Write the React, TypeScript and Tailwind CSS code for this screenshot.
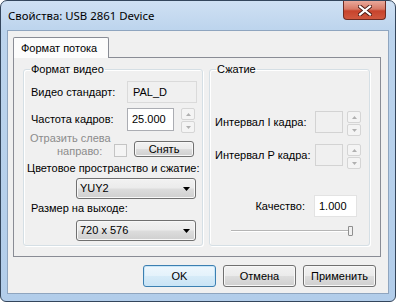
import React from 'react';

const btnGrad =
  'bg-[linear-gradient(180deg,#f2f2f2_0%,#ebebeb_48%,#dddddd_52%,#cfcfcf_100%)]';

function Spinner() {
  return (
    <div className="flex flex-col gap-[1px] w-[14px] h-[25px]">
      <div className="flex-1 flex items-center justify-center border border-[#d5d5d5] rounded-[2px] bg-[#f4f4f4]">
        <svg width="5" height="3" viewBox="0 0 5 3">
          <path d="M0 3L2.5 0L5 3Z" fill="#b0b0b0" />
        </svg>
      </div>
      <div className="flex-1 flex items-center justify-center border border-[#d5d5d5] rounded-[2px] bg-[#f4f4f4]">
        <svg width="5" height="3" viewBox="0 0 5 3">
          <path d="M0 0L2.5 3L5 0Z" fill="#b0b0b0" />
        </svg>
      </div>
    </div>
  );
}

function Combo({ value }: { value: string }) {
  return (
    <div
      className={`w-[120px] h-[21px] flex items-center justify-between pl-[3px] pr-[5px] rounded-[3px] border border-[#707070] shadow-[inset_0_0_0_1px_#f8f8f8] ${btnGrad}`}
    >
      <span>{value}</span>
      <svg width="7" height="4" viewBox="0 0 7 4">
        <path d="M0 0H7L3.5 4Z" fill="#000" />
      </svg>
    </div>
  );
}

function Button({ label, primary }: { label: string; primary?: boolean }) {
  return (
    <div
      className={`w-[73px] h-[22px] flex items-center justify-center rounded-[3px] border ${
        primary
          ? 'border-[#3c7fb1] shadow-[inset_0_0_0_1px_#c8e6f8] bg-[linear-gradient(180deg,#eef7fd_0%,#e4f2fb_48%,#d6ebf8_52%,#c9e3f5_100%)]'
          : `border-[#707070] shadow-[inset_0_0_0_1px_#f8f8f8] ${btnGrad}`
      }`}
    >
      {label}
    </div>
  );
}

export default function App() {
  return (
    <div className="w-[396px] h-[302px] flex flex-col rounded-t-[7px] rounded-b-[6px] border border-[#34465c] bg-[linear-gradient(180deg,#cfe0f3_0px,#bcd4ed_30px,#b2cdea_100%)] overflow-hidden text-[11px] text-black font-['Liberation_Sans',Arial,sans-serif] whitespace-nowrap">
      {/* title bar */}
      <div className="h-[29px] flex items-start justify-between">
        <div className="pl-[7px] pt-[7px] text-[11.4px] leading-[15px] font-['Noto_Sans',sans-serif]">
          Свойства: USB 2861 Device
        </div>
        <div className="mr-[9px] w-[43px] h-[19px] flex items-center justify-center rounded-b-[4px] border border-t-0 border-[#6e2b22] bg-[linear-gradient(180deg,#e9a99b_0%,#d77a67_45%,#c7432c_55%,#d0583f_100%)]">
          <svg width="14" height="11" viewBox="0 0 14 11">
            <path
              d="M2 1.5L12 9.5M12 1.5L2 9.5"
              stroke="#4a1a14"
              strokeWidth="4"
              strokeLinecap="square"
            />
            <path
              d="M2 1.5L12 9.5M12 1.5L2 9.5"
              stroke="#ffffff"
              strokeWidth="2.2"
              strokeLinecap="square"
            />
          </svg>
        </div>
      </div>

      {/* client area */}
      <div className="mx-[6px] mb-[7px] flex-1 flex flex-col border border-[#8fa5bf] bg-[#f0f0f0] pt-[6px] px-[5px]">
        {/* tab header */}
        <div className="flex">
          <div className="relative z-10 -mb-px h-[21px] w-[96px] flex items-center pl-[7px] border border-b-0 border-[#898c95] rounded-t-[2px] bg-[#fcfcfc]">
            Формат потока
          </div>
        </div>

        {/* tab panel */}
        <div className="h-[200px] w-[368px] border border-[#898c95] bg-[#f0f0f0] pl-[9px] pr-[10px] pt-[4px] flex gap-[6px]">
          {/* video format */}
          <fieldset className="w-[180px] h-[184px] border border-[#d5dfe5] rounded-[3px] shadow-[inset_1px_1px_0_#ffffff,1px_1px_0_#ffffff]">
            <legend className="ml-[6px] px-[1px] leading-[14px]">Формат видео</legend>
            <div className="flex flex-col pl-[7px]">
              <div className="mt-[5px] flex items-center">
                <div className="w-[96px]">Видео стандарт:</div>
                <div className="w-[70px] h-[22px] flex items-center pl-[5px] border border-[#dadada] bg-[#f0f0f0]">
                  PAL_D
                </div>
              </div>

              <div className="mt-[5px] flex items-start">
                <div className="w-[96px] h-[23px] flex items-center">Частота кадров:</div>
                <div className="w-[47px] h-[23px] flex items-center pl-[4px] border border-[#abadb3] bg-white">
                  25.000
                </div>
                <div className="ml-[7px]">
                  <Spinner />
                </div>
              </div>

              <div className="-mt-px flex items-start">
                <div className="w-[82px] shrink-0 -ml-px flex flex-col leading-[13px] text-[#8c8c8c]">
                  <div className="flex">
                    <span>Отразить слева</span>
                  </div>
                  <div className="flex">
                    <div className="w-[27px] shrink-0" />
                    <span>направо:</span>
                  </div>
                </div>
                <div className="ml-[2px] mt-[12px] w-[13px] h-[13px] border border-[#c4c4c4] bg-[#f4f4f4]" />
                <div
                  className={`ml-[7px] mt-[9px] w-[60px] h-[16px] flex items-center justify-center rounded-[3px] border border-[#707070] shadow-[inset_0_0_0_1px_#f8f8f8] ${btnGrad}`}
                >
                  Снять
                </div>
              </div>

              <div className="mt-[3px] -ml-[4px] leading-[14px]">
                Цветовое пространство и сжатие:
              </div>
              <div className="mt-[3px] ml-[45px]">
                <Combo value="YUY2" />
              </div>
              <div className="mt-[2px] leading-[14px]">Размер на выходе:</div>
              <div className="mt-[5px] ml-[45px]">
                <Combo value="720 x 576" />
              </div>
            </div>
          </fieldset>

          {/* compression */}
          <fieldset className="w-[161px] h-[184px] border border-[#d5dfe5] rounded-[3px] shadow-[inset_1px_1px_0_#ffffff,1px_1px_0_#ffffff]">
            <legend className="ml-[6px] px-[1px] leading-[14px]">Сжатие</legend>
            <div className="flex flex-col pl-[5px]">
              <div className="mt-[35px] flex items-start">
                <div className="w-[100px] h-[22px] flex items-center">Интервал I кадра:</div>
                <div className="w-[28px] h-[22px] border border-[#d3d3d3] bg-[#f0f0f0]" />
                <div className="ml-[4px]">
                  <Spinner />
                </div>
              </div>
              <div className="mt-[8px] flex items-start">
                <div className="w-[100px] h-[22px] flex items-center">Интервал P кадра:</div>
                <div className="w-[28px] h-[22px] border border-[#d3d3d3] bg-[#f0f0f0]" />
                <div className="ml-[4px]">
                  <Spinner />
                </div>
              </div>

              <div className="mt-[26px] flex items-center justify-end pr-[12px] gap-[9px]">
                <div>Качество:</div>
                <div className="w-[43px] h-[22px] flex items-center pl-[4px] border border-[#e3e3e3] bg-white">
                  1.000
                </div>
              </div>

              <div className="mt-[9px] ml-[16px] relative w-[122px] h-[10px]">
                <div className="absolute left-0 right-[2px] top-[4px] h-[2px] border-t border-[#b5b5b5] border-b border-b-white bg-[#e2e2e2]" />
                <div className="absolute right-0 top-0 w-[5px] h-[10px] rounded-b-[1px] border border-[#8f8f8f] bg-[#f0f0f0]" />
              </div>
            </div>
          </fieldset>
        </div>

        {/* buttons */}
        <div className="mt-[8px] flex justify-end gap-[7px] pr-[7px]">
          <Button label="OK" primary />
          <Button label="Отмена" />
          <Button label="Применить" />
        </div>
      </div>
    </div>
  );
}
